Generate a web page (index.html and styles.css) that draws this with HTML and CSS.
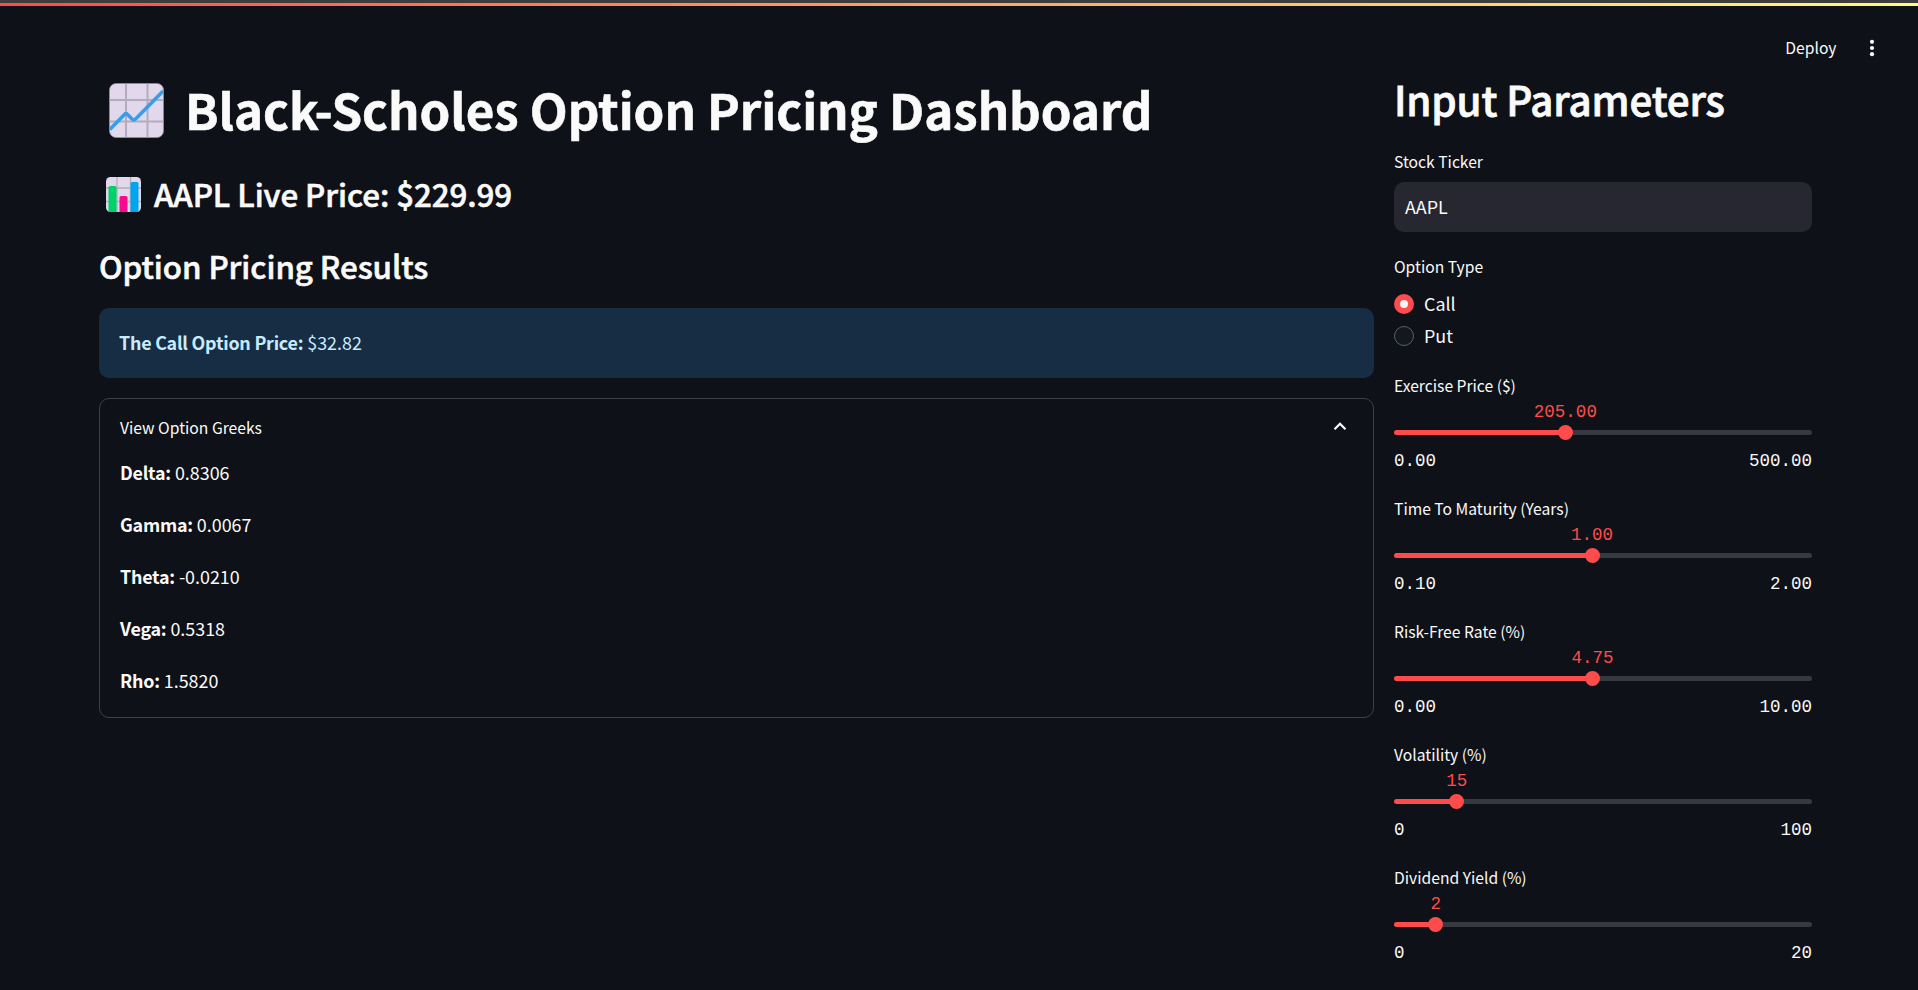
FILE: index.html
```html
<!DOCTYPE html>
<html lang="en">
<head>
<meta charset="utf-8">
<title>Black-Scholes Option Pricing Dashboard</title>
<link rel="stylesheet" href="styles.css">
</head>
<body>
<div class="window-edge"></div>
<div class="decoration"></div>
<header class="toolbar">
  <span class="deploy">Deploy</span>
  <svg class="menu-icon" viewBox="0 0 20 20"><circle cx="10" cy="3.8" r="2.1"/><circle cx="10" cy="10" r="2.1"/><circle cx="10" cy="16.2" r="2.1"/></svg>
</header>
<div class="columns">
  <main class="results">
    <h1 class="title">
      <svg class="emoji-line" viewBox="0 0 55 55"><rect x=".5" y=".5" width="54" height="54" rx="6.5" fill="#e1d8ec"/><path d="M17 .5v54M38.500 .5v54M.5 17h54M.5 38.500h54" stroke="#b4acbc" stroke-width="2" fill="none"/><rect x=".5" y=".5" width="54" height="54" rx="6.500" fill="none" stroke="#998fa3" stroke-width=".7"/><path d="M.8 46.500L15.500 31.500Q17 30 18.600 31.500L23 36Q24.800 37.700 26.600 36L54.200 8" stroke="#379eea" stroke-width="3.600" fill="none"/></svg>
      <span class="title-text">Black-Scholes Option Pricing Dashboard</span>
    </h1>
    <h3 class="subtitle price">
      <svg class="emoji-bar" viewBox="0 0 35 35"><rect width="35" height="35" rx="4.500" fill="#e1d8ec"/><path d="M11 0v35M24.500 0v35M0 11h35M0 24.500h35" stroke="#b4acbc" stroke-width="1.300"/><path d="M2.500 35V10.500q0-1.500 1.500-1.500h5q1.500 0 1.500 1.500V35z" fill="#00d26a"/><path d="M13.500 35V20.500q0-1.500 1.500-1.500h5q1.500 0 1.500 1.500V35z" fill="#f70a8d"/><path d="M24.500 35V6.500q0-1.500 1.500-1.500h5q1.500 0 1.500 1.500V35z" fill="#00a6ed"/></svg>
      <span>AAPL Live Price: $229.99</span>
    </h3>
    <h3 class="subtitle">Option Pricing Results</h3>
    <div class="info"><b>The Call Option Price:</b> $32.82</div>
    <section class="expander">
      <div class="summary"><span>View Option Greeks</span><svg class="chevron" viewBox="0 0 20 20"><path d="M4.500 12.300L10 6.800l5.500 5.500"/></svg></div>
      <p><b>Delta:</b> 0.8306</p>
      <p><b>Gamma:</b> 0.0067</p>
      <p><b>Theta:</b> -0.0210</p>
      <p><b>Vega:</b> 0.5318</p>
      <p><b>Rho:</b> 1.5820</p>
    </section>
  </main>
  <aside class="params">
    <h2 class="params-title">Input Parameters</h2>
    <div class="label">Stock Ticker</div>
    <div class="input">AAPL</div>
    <div class="label">Option Type</div>
    <div class="radios">
      <div class="radio"><span class="dot on"></span><span class="radio-text">Call</span></div>
      <div class="radio"><span class="dot"></span><span class="radio-text">Put</span></div>
    </div>
    <div class="slider" style="--v:41%"><div class="label">Exercise Price ($)</div><div class="track"><span class="value">205.00</span><span class="thumb"></span></div><div class="range"><span>0.00</span><span>500.00</span></div></div>
    <div class="slider" style="--v:47.37%"><div class="label">Time To Maturity (Years)</div><div class="track"><span class="value">1.00</span><span class="thumb"></span></div><div class="range"><span>0.10</span><span>2.00</span></div></div>
    <div class="slider" style="--v:47.5%"><div class="label">Risk-Free Rate (%)</div><div class="track"><span class="value">4.75</span><span class="thumb"></span></div><div class="range"><span>0.00</span><span>10.00</span></div></div>
    <div class="slider" style="--v:15%"><div class="label">Volatility (%)</div><div class="track"><span class="value">15</span><span class="thumb"></span></div><div class="range"><span>0</span><span>100</span></div></div>
    <div class="slider" style="--v:10%"><div class="label">Dividend Yield (%)</div><div class="track"><span class="value">2</span><span class="thumb"></span></div><div class="range"><span>0</span><span>20</span></div></div>
  </aside>
</div>
</body>
</html>
```
FILE: styles.css
```css
* { box-sizing: border-box; }
body {
  margin: 0;
  height: 990px;
  overflow: hidden;
  background: #0e1117;
  color: #fafafa;
  font-family: "Noto Sans CJK SC", "Noto Sans", sans-serif;
  font-size: 17.9px;
}
h1, h2, h3, p { margin: 0; }
.window-edge { height: 3px; background: #3d3d3d; }
.decoration { height: 3px; background: linear-gradient(90deg, #ff4b4b, #fffd80); }
.toolbar {
  height: 66px;
  padding: 30px 36px 0 0;
  display: flex;
  justify-content: flex-end;
  gap: 25.5px;
}
.deploy { font-size: 15.67px; line-height: 24px; }
.menu-icon { width: 20px; height: 20px; margin-top: 2px; fill: #fafafa; }
.columns {
  display: flex;
  gap: 20px;
  padding: 0 106px 0 99px;
}
.results { width: 1275px; padding-top: 3px; }
.title {
  display: flex;
  gap: 21px;
  height: 67px;
  padding-left: 10px;
  font-size: 49.25px;
  line-height: 67px;
  font-weight: 700;
  letter-spacing: -0.04px;
  white-space: nowrap;
  -webkit-text-stroke: 0.6px #fafafa;
}
.emoji-line { width: 55px; height: 55px; margin-top: 8px; flex: none; }
.subtitle {
  margin-top: 31px;
  font-size: 31.3px;
  line-height: 41px;
  font-weight: 500;
  letter-spacing: -0.06px;
  -webkit-text-stroke: 0.6px #fafafa;
}
.price { display: flex; gap: 13.5px; padding-left: 6.5px; }
.emoji-bar { width: 35px; height: 35px; margin-top: 4.4px; }
.info {
  margin-top: 22px;
  height: 70px;
  padding: 0 20px;
  border-radius: 10px;
  background: #172d43;
  color: #c7ebff;
  line-height: 69px;
}
.info b, .expander b { font-weight: 600; letter-spacing: -0.24px; }
.expander {
  margin-top: 20px;
  height: 320px;
  padding: 17px 20px 0;
  border: 1px solid #3e4044;
  border-radius: 10px;
}
.summary {
  display: flex;
  justify-content: space-between;
  font-size: 15.67px;
  line-height: 24px;
  margin-bottom: 16px;
}
.chevron { width: 20px; height: 20px; margin: 1px 3px 0 0; fill: none; stroke: #fafafa; stroke-width: 2.2; }
.expander p { line-height: 32px; margin-bottom: 20px; }
.params { width: 418px; }
.params-title {
  margin-bottom: 25px;
  font-size: 40.3px;
  line-height: 53px;
  font-weight: 500;
  letter-spacing: -0.14px;
  -webkit-text-stroke: 0.8px #fafafa;
}
.label { font-size: 15.67px; line-height: 24px; }
.input {
  height: 50px;
  margin: 8px 0 23px;
  padding-left: 11px;
  border-radius: 10px;
  background: #262730;
  line-height: 48px;
}
.radios { margin: 9px 0 22px; }
.radio { display: flex; align-items: center; gap: 10px; height: 32px; }
.radio-text { line-height: 30px; padding-bottom: 2px; }
.dot { width: 20px; height: 20px; border: 1px solid #5d5f66; border-radius: 50%; background: #13171f; }
.dot.on { border: 6px solid #ff4b4b; background: #f5f5f8; }
.slider { height: 123px; }
.track {
  position: relative;
  height: 5px;
  margin-top: 32px;
  border-radius: 3px;
  background: linear-gradient(90deg, #ff4b4b var(--v), #373941 var(--v));
}
.thumb {
  position: absolute;
  left: var(--v);
  top: -5px;
  width: 15px;
  height: 15px;
  margin-left: -7.5px;
  border-radius: 50%;
  background: #ff4b4b;
}
.value, .range { font-family: "Liberation Mono", monospace; font-size: 17.5px; line-height: 24px; }
.value { position: absolute; left: var(--v); top: -30px; transform: translateX(-50%); color: #ff4b4b; }
.range { display: flex; justify-content: space-between; margin-top: 14px; }
```
